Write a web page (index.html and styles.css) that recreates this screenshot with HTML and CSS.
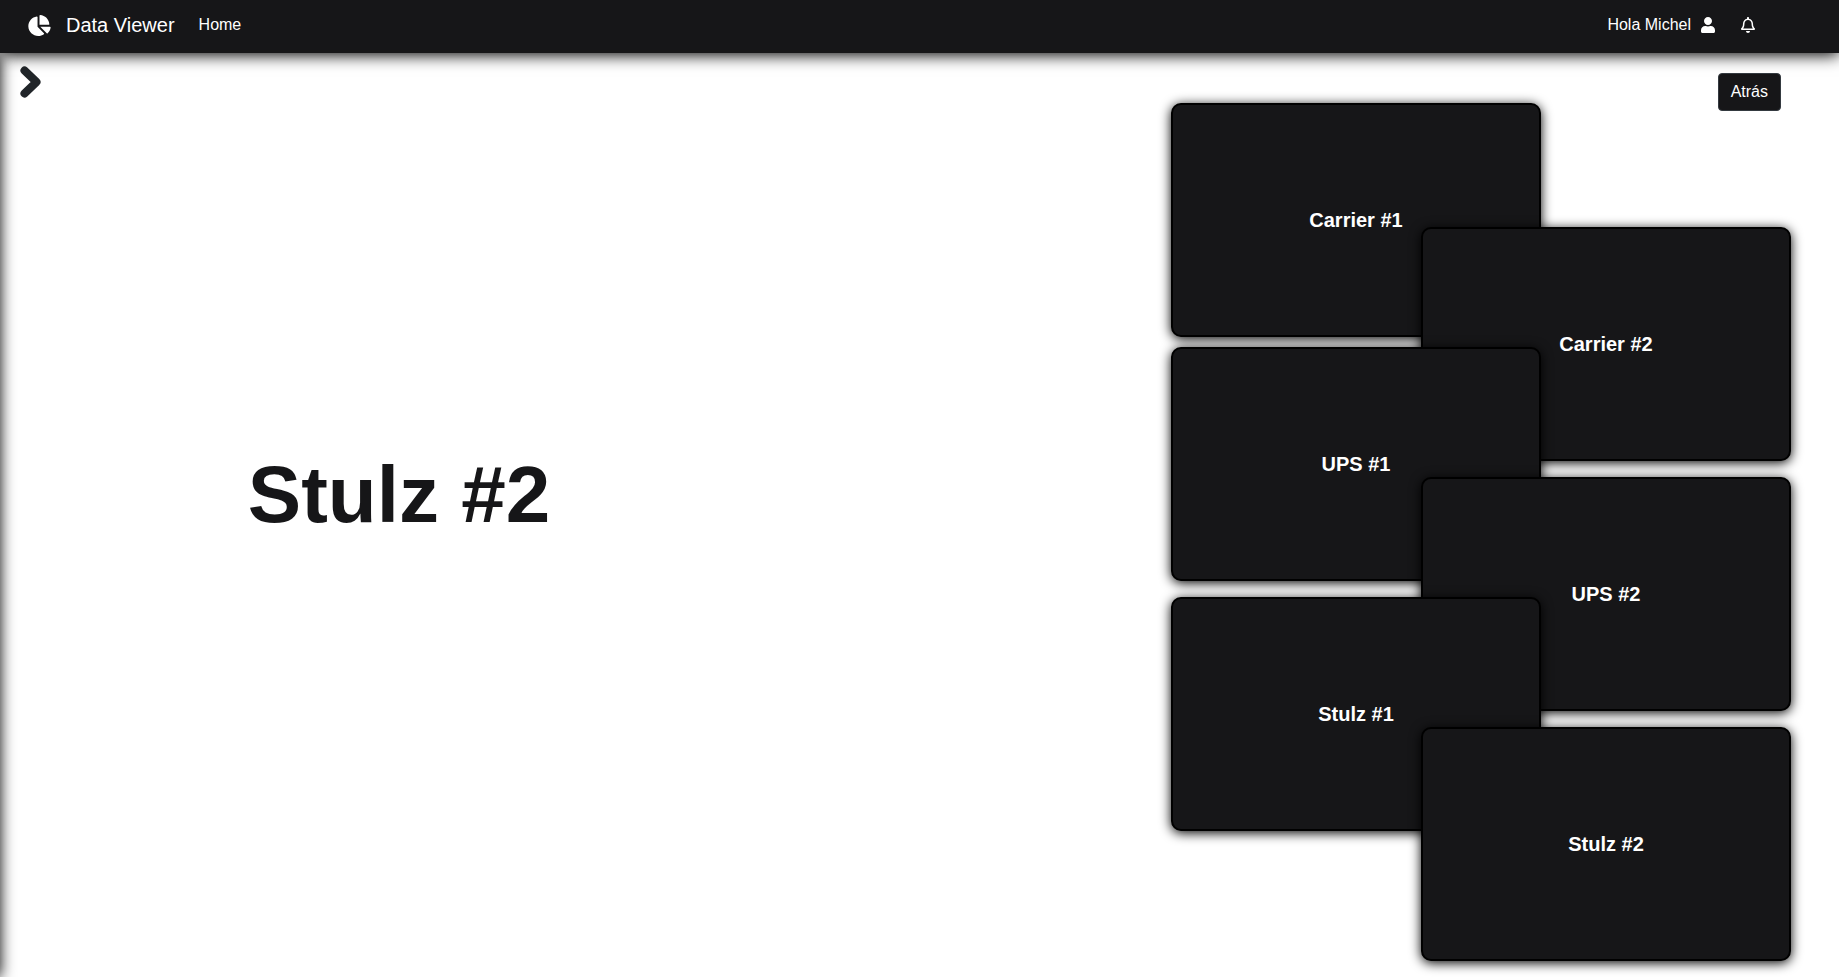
FILE: index.html
```html
<!DOCTYPE html>
<html lang="es">
<head>
<meta charset="utf-8">
<title>Data Viewer</title>
<link rel="stylesheet" href="styles.css">
</head>
<body>
<header class="navbar">
  <a class="brand" href="#">
    <svg class="brand-icon" viewBox="0 0 544 512" aria-hidden="true"><path d="M527.79 288H290.500l158.030 158.030c6.040 6.040 15.980 6.530 22.190.68 38.700-36.460 65.320-85.610 73.130-140.860 1.340-9.460-6.510-17.850-16.060-17.850zm-15.830-64.800C503.720 103.740 408.260 8.280 288.800.04 279.680-.59 272 7.100 272 16.240V240h223.770c9.140 0 16.820-7.680 16.190-16.800zM224 288V50.710c0-9.550-8.390-17.400-17.840-16.060C86.990 51.490-4.100 155.600.14 280.370 4.500 408.510 114.830 513.590 243.030 511.980c50.400-.63 96.970-16.870 135.260-44.030 7.900-5.600 8.420-17.230 1.570-24.080L224 288z"/></svg>
    <span>Data Viewer</span>
  </a>
  <nav class="nav-links"><a href="#">Home</a></nav>
  <div class="user-area">
    <a class="user" href="#">Hola Michel
      <svg class="user-icon" viewBox="0 0 448 512" aria-hidden="true"><path d="M224 256c70.700 0 128-57.300 128-128S294.700 0 224 0 96 57.300 96 128s57.300 128 128 128zm89.600 32h-16.700c-22.200 10.200-46.900 16-72.900 16s-50.600-5.800-72.900-16h-16.700C60.200 288 0 348.200 0 422.400V464c0 26.500 21.500 48 48 48h352c26.500 0 48-21.500 48-48v-41.600c0-74.200-60.200-134.400-134.400-134.400z"/></svg>
    </a>
    <button class="bell" type="button" aria-label="Notificaciones">
      <svg class="bell-icon" viewBox="0 0 448 512" aria-hidden="true"><path d="M439.390 362.290c-19.320-20.760-55.470-51.990-55.470-154.290 0-77.700-54.480-139.900-127.940-155.160V32c0-17.670-14.320-32-31.980-32s-31.980 14.330-31.980 32v20.840C118.560 68.100 64.080 130.300 64.080 208c0 102.300-36.150 133.530-55.470 154.290-6 6.450-8.660 14.160-8.610 21.710.11 16.400 12.980 32 32.100 32h383.800c19.120 0 32-15.600 32.100-32 .05-7.550-2.610-15.270-8.610-21.710zM67.530 368c21.220-27.970 44.420-74.330 44.530-159.420 0-.2-.06-.38-.06-.58 0-61.860 50.140-112 112-112s112 50.140 112 112c0 .2-.06.38-.06.58.11 85.100 23.310 131.460 44.530 159.420H67.530zM224 512c35.320 0 63.970-28.650 63.970-64H160.030c0 35.350 28.650 64 63.970 64z"/></svg>
    </button>
  </div>
</header>
<div class="page">
  <aside class="sidebar"></aside>
  <button class="expand" type="button" aria-label="Abrir menú">
    <svg class="expand-icon" viewBox="0 0 24 34" aria-hidden="true"><path d="M6.500 5.500L18.500 17L6.500 28.500"/></svg>
  </button>
  <main class="content">
    <h1 class="title">Stulz #2</h1>
    <section class="cards">
      <button class="back" type="button">Atrás</button>
      <a class="card carrier-1" href="#">Carrier #1</a>
      <a class="card carrier-2" href="#">Carrier #2</a>
      <a class="card ups-1" href="#">UPS #1</a>
      <a class="card ups-2" href="#">UPS #2</a>
      <a class="card stulz-1" href="#">Stulz #1</a>
      <a class="card stulz-2" href="#">Stulz #2</a>
    </section>
  </main>
</div>
</body>
</html>
```
FILE: styles.css
```css
* { box-sizing: border-box; }

body {
  margin: 0;
  min-height: 100vh;
  display: flex;
  flex-direction: column;
  font: 16px/24px "Liberation Sans", Arial, sans-serif;
  color: #161618;
  background: #fff;
  overflow-x: hidden;
}

a { color: inherit; text-decoration: none; }
button { font: inherit; cursor: pointer; }
svg { display: block; fill: currentColor; }

.navbar {
  position: relative;
  z-index: 2;
  display: flex;
  align-items: center;
  padding: 10px 84px 13px 28px;
  color: #fff;
  background: #161618;
  box-shadow: 0 2px 15px #000;
}

.brand {
  display: flex;
  align-items: center;
  gap: 15px;
  font-size: 20px;
  line-height: 30px;
}

.brand-icon { width: 23px; height: 21px; }
.nav-links { margin-left: 24px; }
.user-area { display: flex; align-items: center; gap: 26px; margin-left: auto; }
.user { display: flex; align-items: center; gap: 10px; }
.user-icon, .bell-icon { width: 14px; height: 16px; }
.bell { padding: 0; border: 0; color: inherit; background: none; }

.page { position: relative; flex: 1; display: flex; }

/* Collapsed off the left edge; only its shadow shows. */
.sidebar {
  width: 40px;
  margin-left: -40px;
  box-shadow: 0 0 15px #000;
}

.expand {
  position: absolute;
  top: 12px;
  left: 18px;
  padding: 0;
  border: 0;
  color: #212529;
  background: none;
}

.expand-icon {
  width: 24px;
  height: 34px;
  fill: none;
  stroke: currentColor;
  stroke-width: 8;
  stroke-linecap: round;
  stroke-linejoin: round;
}

.content {
  flex: 1;
  display: grid;
  grid-template-columns: 798fr 373fr 620fr;
  padding: 20px 48px 16px 0;
}

.title {
  margin: 0;
  padding-bottom: 44px;
  align-self: center;
  text-align: center;
  font-size: 80px;
  line-height: 96px;
}

.cards {
  grid-column: 3;
  display: grid;
  grid-template-columns: 25fr 12fr 25fr;
  grid-template-rows: 30px 124px 120px 130px 120px 130px 234px;
}

.card {
  height: 234px;
  display: flex;
  align-items: center;
  justify-content: center;
  border: 2px solid #000;
  border-radius: 10px;
  color: #fff;
  background: #161618;
  box-shadow: 0 2px 12px #000;
  font-size: 20px;
  font-weight: 700;
}

.carrier-1 { grid-area: 2 / 1 / 3 / 3; }
.carrier-2 { grid-area: 3 / 2 / 4 / 4; }
.ups-1 { grid-area: 4 / 1 / 5 / 3; }
.ups-2 { grid-area: 5 / 2 / 6 / 4; }
.stulz-1 { grid-area: 6 / 1 / 7 / 3; }
.stulz-2 { grid-area: 7 / 2 / 8 / 4; }

.back {
  grid-area: 1 / 3 / 3 / 4;
  justify-self: end;
  align-self: start;
  margin-right: 10px;
  padding: 6px 12px;
  border: 1px solid #343a40;
  border-radius: 4px;
  color: #fff;
  background: #161618;
}
```
